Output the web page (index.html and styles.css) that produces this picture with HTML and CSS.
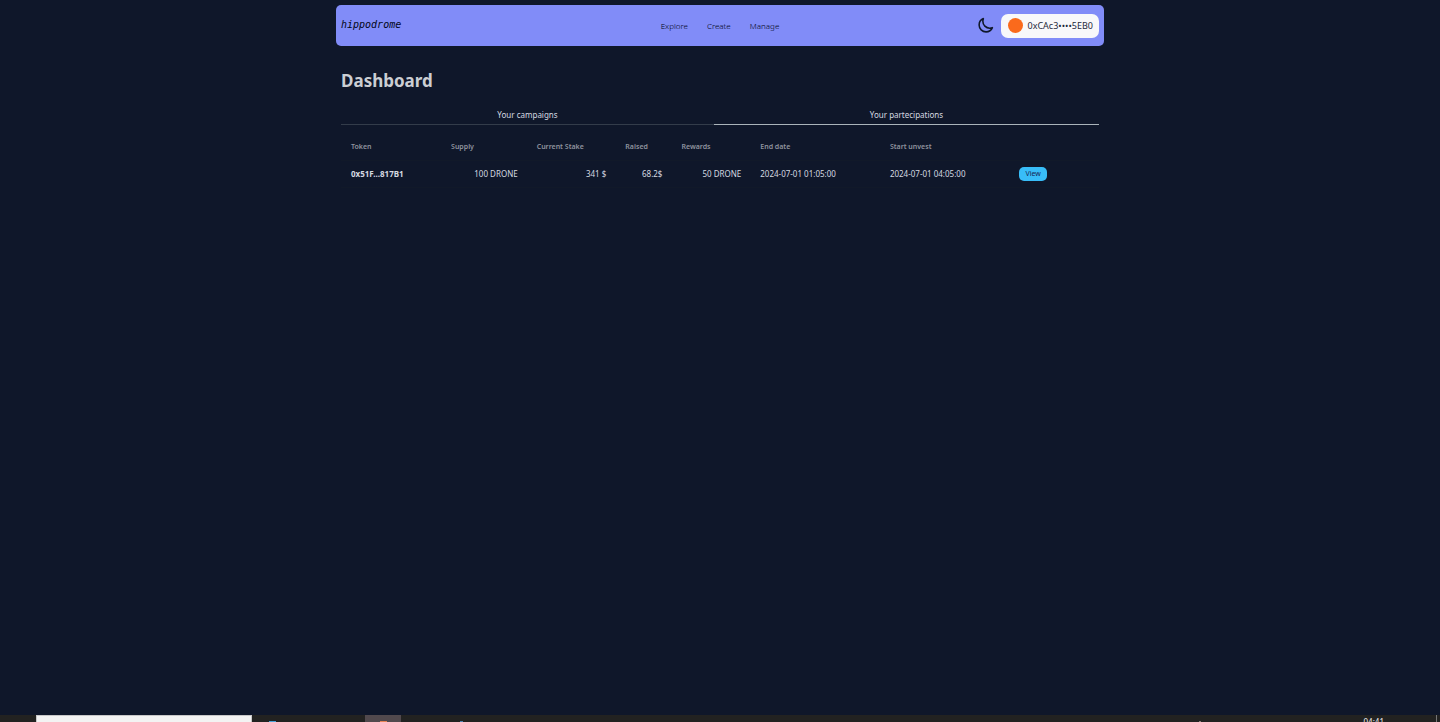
FILE: index.html
```html
<!DOCTYPE html>
<html lang="en">
<head>
<meta charset="utf-8">
<meta name="viewport" content="width=device-width, initial-scale=1">
<title>hippodrome</title>
<link rel="stylesheet" href="styles.css">
</head>
<body>
<div class="container">
  <header class="navbar">
    <a class="brand" href="#">hippodrome</a>
    <nav class="menu">
      <a href="#">Explore</a>
      <a href="#">Create</a>
      <a href="#">Manage</a>
    </nav>
    <div class="actions">
      <button class="theme" type="button" aria-label="Toggle theme">
        <svg width="17" height="17" viewBox="0 0 24 24" fill="none" stroke="currentColor" stroke-width="2.2" stroke-linecap="round" stroke-linejoin="round"><path d="M21.75 15A9.72 9.72 0 0 1 18 15.75c-5.385 0-9.75-4.365-9.75-9.75 0-1.33.266-2.6.748-3.75A9.753 9.753 0 0 0 3 11.25C3 16.635 7.365 21 12.75 21a9.753 9.753 0 0 0 9-6z"/></svg>
      </button>
      <button class="account" type="button"><span class="avatar"></span>0xCAc3••••5EB0</button>
    </div>
  </header>
  <main>
    <h1>Dashboard</h1>
    <div class="tabs" role="tablist">
      <button class="tab" type="button" role="tab" aria-selected="false">Your campaigns</button>
      <button class="tab active" type="button" role="tab" aria-selected="true">Your partecipations</button>
    </div>
    <table class="stakes">
      <colgroup>
        <col class="token"><col class="supply"><col class="stake"><col class="raised"><col class="rewards"><col class="date"><col class="date"><col>
      </colgroup>
      <thead>
        <tr><th>Token</th><th>Supply</th><th>Current Stake</th><th>Raised</th><th>Rewards</th><th>End date</th><th>Start unvest</th><th></th></tr>
      </thead>
      <tbody>
        <tr>
          <td class="address">0x51F...817B1</td>
          <td class="amount">100 DRONE</td>
          <td class="amount">341 $</td>
          <td class="amount">68.2$</td>
          <td class="amount">50 DRONE</td>
          <td>2024-07-01 01:05:00</td>
          <td>2024-07-01 04:05:00</td>
          <td><button class="view" type="button">View</button></td>
        </tr>
      </tbody>
    </table>
  </main>
</div>
<footer class="taskbar">
  <div class="search"></div>
  <div class="app"><span class="dot blue"></span></div>
  <div class="app selected"><span class="dot orange"></span></div>
  <div class="app"><span class="dot small"></span></div>
  <div class="tray"><span class="dot pale"></span></div>
  <time class="clock">04:41</time>
  <div class="edge"></div>
</footer>
</body>
</html>
```
FILE: styles.css
```css
* { box-sizing: border-box; }

body {
  margin: 0;
  min-height: 100vh;
  display: flex;
  flex-direction: column;
  background: #0f172a;
  color: #d6dae1;
  font: 8px/12px "Noto Sans", "Open Sans", sans-serif;
}

button {
  border: 0;
  padding: 0;
  background: none;
  color: inherit;
  font: inherit;
  cursor: pointer;
}

a { color: inherit; text-decoration: none; }

.container {
  width: 100%;
  max-width: 768px;
  margin: 0 auto;
  padding-top: 5px;
  flex: 1;
}

.navbar {
  display: grid;
  grid-template-columns: 1fr auto 1fr;
  align-items: center;
  height: 41px;
  padding: 0 5px;
  border-radius: 5px;
  background: #818cf8;
  color: #0f172a;
}

.brand {
  padding-bottom: 2px;
  font: italic 10px/12px "DejaVu Sans Mono", monospace;
  color: #020617;
}

.menu {
  display: flex;
  gap: 19px;
  color: #020617;
  font-weight: 300;
}

.actions {
  display: flex;
  align-items: center;
  justify-content: flex-end;
  gap: 7px;
}

.theme, .theme svg { display: block; }

.account {
  display: flex;
  align-items: center;
  gap: 4px;
  height: 24px;
  padding: 0 6px 0 7px;
  border-radius: 7px;
  background: #f8f8fa;
  color: #1e293b;
  font-size: 9px;
}

.avatar {
  width: 15px;
  height: 15px;
  border-radius: 50%;
  background: #fa6a1c;
}

main { padding: 23px 5px; }

h1 {
  margin: 0;
  color: #cbced3;
  font-size: 17px;
  line-height: 24px;
}

.tabs {
  display: flex;
  margin-top: 13px;
}

.tab {
  flex: 373;
  height: 19px;
  border-bottom: 1px solid #333c4a;
}

.tab.active {
  flex: 385;
  border-color: #aab4ba;
}

.stakes {
  width: 100%;
  margin-top: 9px;
  table-layout: fixed;
  border-collapse: collapse;
}

.token { width: 13.2%; }
.supply { width: 11.3%; }
.stake { width: 11.7%; }
.raised { width: 7.4%; }
.rewards { width: 10.4%; }
.date { width: 17.1%; }

.stakes th, .stakes td {
  padding: 0 9px 0 10px;
  text-align: left;
  white-space: nowrap;
}

.stakes th {
  height: 26px;
  color: #8f949f;
  font-size: 7px;
  font-weight: 600;
}

.stakes td { height: 27px; }
.stakes tr { border-bottom: 1px solid #111929; }
.stakes .amount { text-align: right; }
.stakes .address { font-weight: 700; }

.view {
  display: block;
  height: 14px;
  padding: 0 6px;
  border-radius: 5px;
  background: #38bdf8;
  color: #172554;
  font-size: 7px;
  line-height: 14px;
}

.taskbar {
  display: flex;
  height: 7px;
  padding-left: 36px;
  overflow: hidden;
  background: #222221;
}

.search {
  width: 216px;
  margin-right: 2px;
  border: 1px solid #c8c8c8;
  border-bottom: 0;
  background: #f3f3f3;
}

.app, .tray {
  display: flex;
  align-items: flex-end;
  justify-content: center;
  width: 36px;
}

.app + .app { margin-left: 75px; }
.app + .app + .app { margin-left: 42px; }
.selected { background: #51494d; }

.dot { width: 7px; height: 1px; }
.blue { background: #4aa3d8; }
.orange { background: #e88354; }
.small { width: 3px; background: #4d83b0; }
.pale { width: 2px; background: #8b807b; }

.tray { margin-left: auto; }

.clock {
  margin: 1px 52px 0 146px;
  color: #f1f1f1;
  line-height: 12px;
}

.edge {
  width: 1px;
  margin-right: 3px;
  background: #777;
}
```
